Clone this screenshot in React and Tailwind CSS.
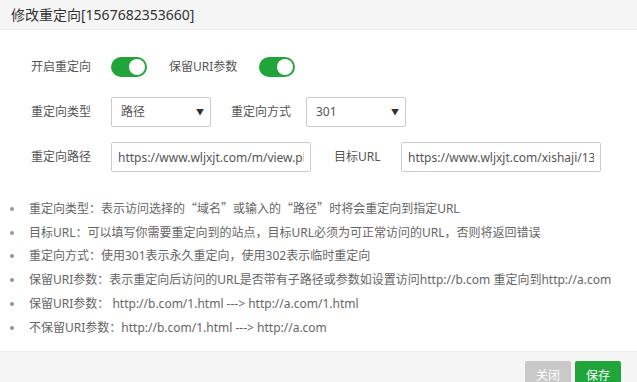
import { useState } from "react";

const Q = ({ children }) => (
  <span style={{ fontFamily: '"Noto Sans CJK SC", sans-serif' }}>{children}</span>
);

const NOTES = [
  <>重定向类型：表示访问选择的<Q>“</Q>域名<Q>”</Q>或输入的<Q>“</Q>路径<Q>”</Q>时将会重定向到指定URL</>,
  "目标URL：可以填写你需要重定向到的站点，目标URL必须为可正常访问的URL，否则将返回错误",
  "重定向方式：使用301表示永久重定向，使用302表示临时重定向",
  "保留URI参数：表示重定向后访问的URL是否带有子路径或参数如设置访问http://b.com 重定向到http://a.com",
  "保留URI参数： http://b.com/1.html ---> http://a.com/1.html",
  "不保留URI参数：http://b.com/1.html ---> http://a.com",
];

function Toggle({ on, onChange }) {
  return (
    <button
      onClick={() => onChange(!on)}
      className={`w-[36px] h-[20px] rounded-full p-[2px] flex items-center ${
        on ? "bg-[#20a53a] justify-end" : "bg-[#ccc] justify-start"
      }`}
    >
      <span className="w-[16px] h-[16px] rounded-full bg-white block" />
    </button>
  );
}

function Select({ value }) {
  return (
    <div className="w-[100px] h-[30px] border border-[#ccc] rounded-[2px] flex items-center justify-between pl-[9px] pr-[6px] text-[12px] text-[#555]">
      <span>{value}</span>
      <span className="text-[8px] text-[#333]">▼</span>
    </div>
  );
}

function TextInput({ value }) {
  return (
    <input
      readOnly
      value={value}
      className="w-[200px] h-[30px] border border-[#ccc] rounded-[2px] px-[6px] text-[12px] text-[#555] outline-none"
    />
  );
}

export default function App() {
  const [redirect, setRedirect] = useState(true);
  const [keepUri, setKeepUri] = useState(true);

  return (
    <div
      className="w-[637px] h-[382px] overflow-hidden bg-white flex flex-col text-[#555]"
      style={{ fontFamily: '"Noto Sans", "Noto Sans CJK SC", sans-serif' }}
    >
      <div className="h-[30px] bg-[#f5f5f5] border-b border-[#eee] flex items-center pl-[11px] text-[14px] text-[#333]">
        修改重定向[1567682353660]
      </div>

      <div className="pt-[27px] pl-[31px] text-[12px] text-[#555]">
        <div className="flex items-center h-[20px]">
          <span className="w-[80px]">开启重定向</span>
          <Toggle on={redirect} onChange={setRedirect} />
          <span className="ml-[22px] w-[90px]">保留URI参数</span>
          <Toggle on={keepUri} onChange={setKeepUri} />
        </div>

        <div className="flex items-center mt-[20px]">
          <span className="w-[80px]">重定向类型</span>
          <Select value="路径" />
          <span className="ml-[20px] w-[75px]">重定向方式</span>
          <Select value="301" />
        </div>

        <div className="flex items-center mt-[15px]">
          <span className="w-[80px]">重定向路径</span>
          <TextInput value="https://www.wljxjt.com/m/view.php?aid=1356" />
          <span className="ml-[23px] w-[67px]">目标URL</span>
          <TextInput value="https://www.wljxjt.com/xishaji/1356.html" />
        </div>
      </div>

      <ul className="mt-[25px] pl-[10px] text-[12px] text-[#666]">
        {NOTES.map((n, i) => (
          <li key={i} className="h-[23.8px] flex items-center whitespace-nowrap">
            <span className="w-[4px] h-[4px] rounded-full bg-[#999] mr-[15px] shrink-0" />
            <span>{n}</span>
          </li>
        ))}
      </ul>

      <div className="mt-auto h-[31px] bg-[#f5f5f5] border-t border-[#eee] flex justify-end items-start pr-[16px] pt-[9px] gap-[4px] text-[12px]">
        <button className="w-[46px] h-[30px] rounded-[2px] bg-[#c9c9c9] text-white">关闭</button>
        <button className="w-[46px] h-[30px] rounded-[2px] bg-[#20a53a] text-white">保存</button>
      </div>
    </div>
  );
}
